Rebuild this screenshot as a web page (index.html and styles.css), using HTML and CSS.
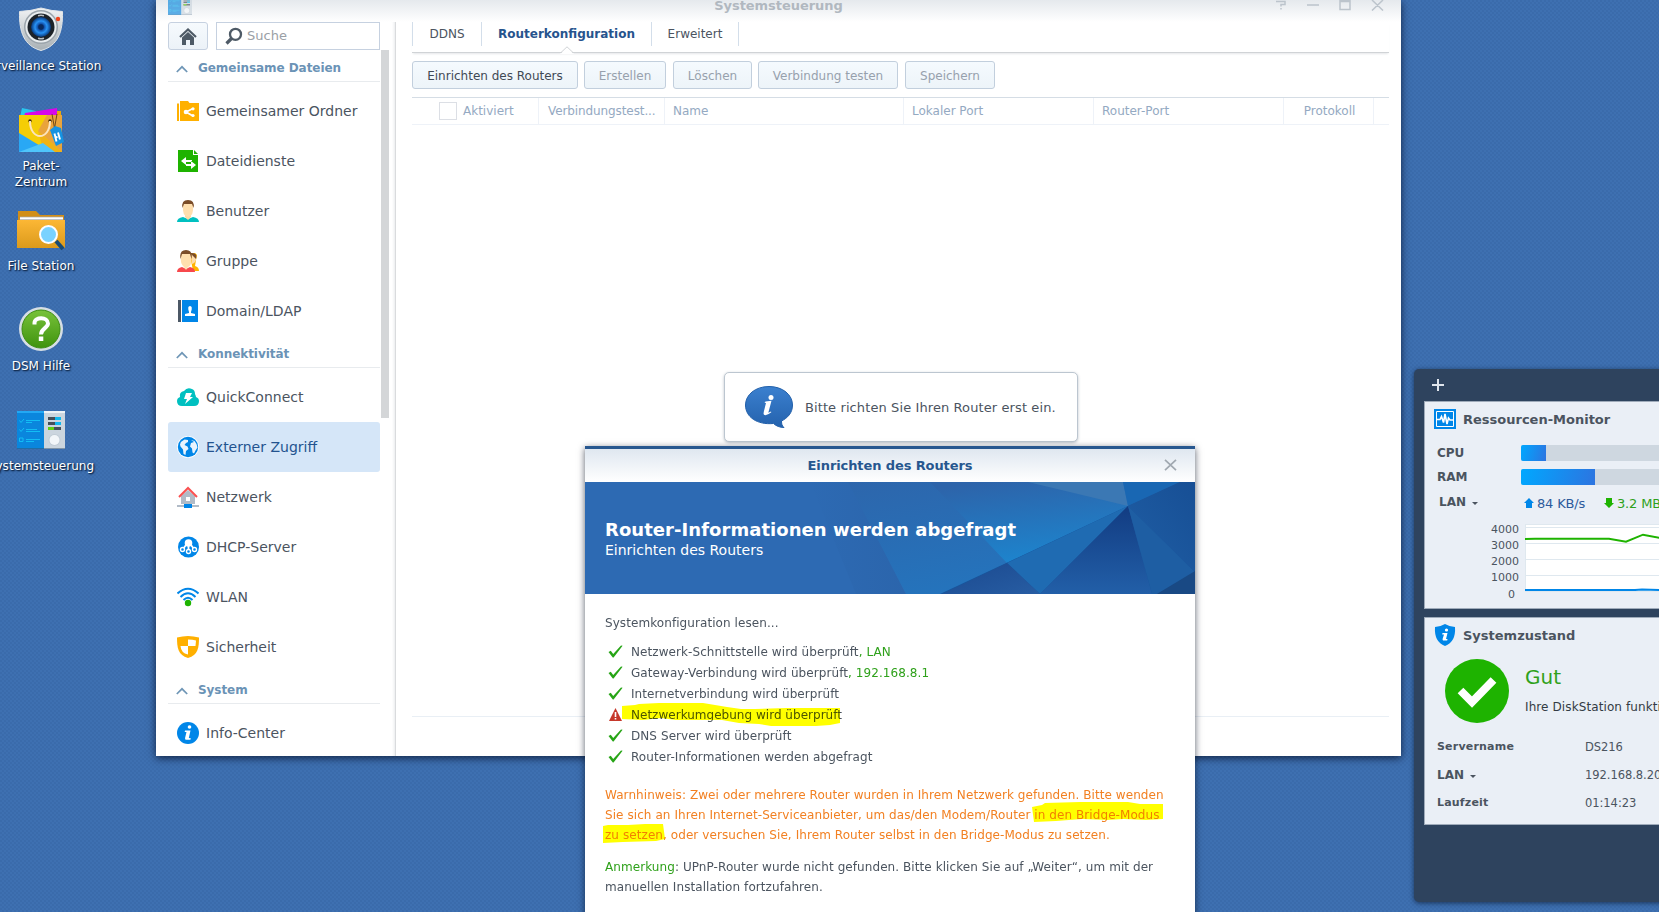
FILE: index.html
```
<!DOCTYPE html>
<html lang="de">
<head>
<meta charset="utf-8">
<title>Systemsteuerung</title>
<link rel="stylesheet" href="styles.css">
</head>
<body>
<svg width="0" height="0" class="defs">
  <defs>
    <symbol id="check" viewBox="0 0 15 13"><path d="M.5 7 2.800 5.800 5.200 9 13 .5 14.600.8 5.600 12.500H4.800z" fill="#27a516"/></symbol>
    <symbol id="chev" viewBox="0 0 12 8"><path d="M.8 7 6 1.800 11.200 7" fill="none" stroke="#6f96b6" stroke-width="1.700"/></symbol>
    <symbol id="panel" viewBox="0 0 48 38">
      <path d="M0 0h27v38H0z" fill="#0a86dd"/><path d="M0 0h27v2H0z" fill="#22a8f4"/><path d="M27 0h21v38H27z" fill="#cbd5de"/><path d="M27 0h21v2H27z" fill="#eef3f7"/>
      <path d="M2.500 9.500l1.500 2 3-3.500M2.500 18.500l1.500 2 3-3.500M2.500 27h3.500v3.500H2.500zM9 9.500h14M9 11.500h6M9 18.500h11M9 20.500h14M9 28.500h14M9 30.500h8" fill="none" stroke="#12bdf5" stroke-width="1"/>
      <path d="M31 6h13v3H31zM31 11h13v3H31zM31 16h13v3H31z" fill="#454e58"/><path d="M38 6h6v3h-6zM38 11h6v3h-6z" fill="#10b7ee"/><path d="M31 16h6v3h-6z" fill="#62cf10"/>
      <circle cx="37.500" cy="29" r="6" fill="#c1ccd6"/><circle cx="37.500" cy="29" r="5" fill="#f2f6f9"/><path d="M0 37h48v1H0z" fill="#35546f" opacity=".5"/>
    </symbol>
  </defs>
</svg>

<main class="desktop">
  <nav class="shortcuts">
    <a class="shortcut">
      <svg width="46" height="46" viewBox="0 0 46 46">
        <defs><linearGradient id="sg" x2="0" y2="1"><stop stop-color="#f1f3f4"/><stop offset="1" stop-color="#a8b0b5"/></linearGradient><radialGradient id="lens"><stop stop-color="#072c69"/><stop offset=".25" stop-color="#0b3e94"/><stop offset=".6" stop-color="#2792f5"/><stop offset="1" stop-color="#073679"/></radialGradient></defs>
        <path d="M1.500 4.500Q13 4 23 1q10 3 21.500 3.500C45 25 40 39 23 43.500 6 39 1 25 1.500 4.500z" fill="url(#sg)" stroke="#e1e5e8"/><circle cx="23" cy="20" r="17" fill="#9ba4ab"/><circle cx="23" cy="20" r="15.500" fill="#e9edef"/><circle cx="23" cy="20" r="13.500" fill="#1c2228"/><circle cx="23" cy="20" r="10" fill="url(#lens)"/><circle cx="23" cy="20" r="2.700" fill="#092a5d"/><path d="M20 8.800q3-1 6 0M20 31.200q3 1 6 0" stroke="#b8bec4" stroke-width="1.500" fill="none"/><circle cx="40" cy="12" r="2.200" fill="#f0441b"/>
      </svg><span>Surveillance Station</span></a>
    <a class="shortcut">
      <svg width="46" height="46" viewBox="0 0 46 46">
        <path d="M4 1l14 3v6H2z" fill="#29c5ee"/><path d="M7 6l32-5 1 9H6z" fill="#d707ea"/><path d="M39 4h4v6h-4z" fill="#e8a70c"/><path d="M1 8h43v37H1z" fill="#f5cd06"/><path d="M29 8h15v37L20 24z" fill="#e9a43b"/><path d="M20 24l24 21H26z" fill="#f0b313"/><path d="M1 26l23 14 5 5H1z" fill="#29a8f5"/><path d="M1 45l24-9 12 9z" fill="#4fc5fb"/>
        <circle cx="12" cy="14" r="1.700" fill="#3e2a08"/><circle cx="32" cy="14" r="1.700" fill="#3e2a08"/><path d="M12 14c0 20 20 20 20 0" fill="none" stroke="#fbe4bd" stroke-width="2"/><path d="M34 7l3 17M39 7l-3 17" stroke="#704a16" stroke-width="1"/><path d="M32 23l5-4 6 2 3 14-8 4z" fill="#1593e2"/><path d="M36.500 26.500l1 4 2-.6M37.500 30.500l1 4M40 25.500l2 7" fill="none" stroke="#fff" stroke-width="1.900"/>
      </svg><span>Paket-<br>Zentrum</span></a>
    <a class="shortcut">
      <svg width="50" height="46" viewBox="0 0 50 46">
        <defs><linearGradient id="fg" x2="0" y2="1"><stop stop-color="#fcb735"/><stop offset="1" stop-color="#db9a1c"/></linearGradient></defs>
        <path d="M2 4h18l4 4h24v20H2z" fill="#d18e18"/><path d="M4 10h43v7H4z" fill="#fff"/><path d="M4 10h43M4 12.500h43" stroke="#a9a9a9" stroke-width=".7"/><path d="M1 13h48v28H1z" fill="url(#fg)"/><path d="M40 34l7 8" stroke="#174b75" stroke-width="4"/><circle cx="32.500" cy="27.500" r="8.500" fill="#79d2ff" stroke="#fbfdff" stroke-width="2"/>
      </svg><span>File Station</span></a>
    <a class="shortcut">
      <svg width="46" height="46" viewBox="0 0 46 46">
        <defs><linearGradient id="hg" x2="0" y2="1"><stop stop-color="#78c23a"/><stop offset="1" stop-color="#3f930e"/></linearGradient></defs>
        <circle cx="23" cy="22" r="22" fill="#d6dee5"/><circle cx="23" cy="22" r="19" fill="url(#hg)" stroke="#3c8c10"/><path d="M16.500 17.500V16c0-6.500 13.500-6.500 13.500.500 0 4.500-7 5-7 11" fill="none" stroke="#fff" stroke-width="4"/><path d="M20.800 29.500h4.500V34h-4.500z" fill="#fff"/>
      </svg><span>DSM Hilfe</span></a>
    <a class="shortcut"><svg width="48" height="46" viewBox="0 0 48 46"><use href="#panel" width="48" height="38" y="4"/></svg><span>Systemsteuerung</span></a>
  </nav>

  <section class="window">
    <header class="titlebar">
      <svg class="appicon" width="24" height="19" viewBox="0 0 48 38"><use href="#panel" width="48" height="38"/></svg>
      <h1>Systemsteuerung</h1>
      <svg class="controls" width="112" height="14" viewBox="0 0 112 14"><g fill="none" stroke="#bcc4cc" stroke-width="1.500"><path d="M0 4.500h9v3H5v2M5 11v1.500M31 8h12"/><path d="M64 3.500h10v9H64zM63.500 4.500h11M96 3l11 10.500M107 3L96 13.500"/></g></svg>
    </header>
    <aside class="sidebar">
      <div class="search-row">
        <button class="home"><svg width="18" height="17" viewBox="0 0 18 17"><path d="M1 9 9 1.500 17 9" fill="none" stroke="#4e5a66" stroke-width="2.200"/><path d="M3 9.500 9 4l6 5.500V17h-4v-5H7v5H3z" fill="#4e5a66"/></svg></button>
        <label class="search"><svg width="18" height="18" viewBox="0 0 18 18"><circle cx="10.500" cy="7.300" r="5.500" fill="none" stroke="#4e5a66" stroke-width="2.300"/><path d="M7 11 1.500 16.500" stroke="#4e5a66" stroke-width="3.200"/></svg><span>Suche</span></label>
      </div>
      <div class="nav">
        <h2><svg width="12" height="8"><use href="#chev"/></svg>Gemeinsame Dateien</h2>
        <a><svg viewBox="0 0 22 22"><path d="M0 3.500h2V21H0zM3 1h8l1.500 2H22v18H3z" fill="#ffb000"/><path d="M9 12l7-3.500M9 12l7 4" stroke="#fff" stroke-width="1.800"/><circle cx="9" cy="12" r="2.300" fill="#fff"/><circle cx="16" cy="8.800" r="1.600" fill="#fff"/><circle cx="16" cy="15.500" r="1.600" fill="#fff"/></svg>Gemeinsamer Ordner</a>
        <a><svg viewBox="0 0 22 22"><path d="M1 0h15v5h5v17H1z" fill="#1eb300"/><path d="M17 0l4 4h-4z" fill="#1eb300"/><path d="M4 11l5-4v3h6v2H9v3zM19 15l-5-4v3H9v2h5v3z" fill="#fff"/></svg>Dateidienste</a>
        <a><svg viewBox="0 0 22 22"><path d="M0 22q0-4 6-5l5 2 5-2q6 1 6 5z" fill="#00c0c0"/><path d="M8 13h6v4l-3 3-3-3z" fill="#ffd9a0"/><path d="M6 6q0-3 5-3t5 3q1 10-5 11Q5 16 6 6z" fill="#ffdfae"/><path d="M5.500 8Q4 0 11 0q7 0 5.500 8L15 4H7z" fill="#7b4d28"/></svg>Benutzer</a>
        <a><svg viewBox="0 0 22 22"><path d="M13 5q5-4 7 0l-1 5-1 6q4 1 4 5h-6z" fill="#ffb500"/><path d="M14 5h5q1 8-4 9z" fill="#ffdca8"/><path d="M13 3q8-1 6 6l-2-2z" fill="#7b4d28"/><path d="M0 22q0-4 5-5l4 2 4-2q5 1 5 5z" fill="#f7484c"/><path d="M4 6q0-4 5-4t5 4q1 10-3 11l-2 3-2-3Q3 14 4 6z" fill="#ffdfae"/><path d="M3.500 9Q2 0 9 0q7 0 5.500 9L13 4H5z" fill="#7b4d28"/></svg>Gruppe</a>
        <a><svg viewBox="0 0 22 22"><path d="M1 0h3v22H1z" fill="#4c5866"/><path d="M5 0h16v22H5z" fill="#0086e8"/><path d="M8 16v-2l4-1v-1q-2-6 1-6t1 6v1l4 1v2z" fill="#fff"/></svg>Domain/LDAP</a>
        <h2><svg width="12" height="8"><use href="#chev"/></svg>Konnektivität</h2>
        <a><svg viewBox="0 0 22 22"><path d="M5 20q-5 0-5-5 0-3 3-4-1-5 4-6 3-4 8-2 3 1 3 5 1 2 1 3 3 1 3 4 0 5-5 5z" fill="#00c0c0"/><path d="M9 7h6l-2 4h3l-8 7 2-5H7z" fill="#fff"/></svg>QuickConnect</a>
        <a class="selected"><svg viewBox="0 0 22 22"><circle cx="11" cy="11" r="11" fill="#fff"/><circle cx="11" cy="11" r="10.200" fill="#0086e8"/><path d="M3 8.500q1-3.500 4.500-5l3.500.5v2L9 7 7.500 9l3 1.500 1 2.500-2.500 2-.5 4-2-1-.5-4.500-2.500-3zM14 4l3.500 1q3 3.500 3 6.500l-2 3-1.500 3-1.500-1-.5-4-2-2 1-3.500 3-1z" fill="#e9f3fd"/></svg>Externer Zugriff</a>
        <a><svg viewBox="0 0 22 22"><path d="M4 10l7-6 7 6v8H4z" fill="#b1bbc7"/><path d="M9 11h4v4H9z" fill="#fff"/><path d="M2 11 11 2l9 9" fill="none" stroke="#fa5050" stroke-width="2"/><path d="M0 20h22" stroke="#b1bbc7" stroke-width="2"/><path d="M7 18h8v4H7z" fill="#0086e8"/></svg>Netzwerk</a>
        <a><svg viewBox="0 0 22 22"><circle cx="11.500" cy="11" r="10.500" fill="#0086e8"/><circle cx="11.500" cy="7" r="3.800" fill="#fff"/><path d="M11.500 9v6M9 9l-3 4M14 9l3 4" stroke="#fff" stroke-width="1.800"/><g fill="#0086e8" stroke="#fff" stroke-width="1.400"><circle cx="5.500" cy="13.500" r="2"/><circle cx="17.500" cy="13.500" r="2"/><circle cx="11.500" cy="15.500" r="2"/></g></svg>DHCP-Server</a>
        <a><svg viewBox="0 0 22 22"><g fill="none" stroke="#0086e8" stroke-width="2"><path d="M.5 7.500Q11-2 21.500 7.500M3.500 11Q11 3.500 18.500 11M6.500 14Q11 9.500 15.500 14"/></g><circle cx="11" cy="17" r="3.200" fill="#1eb300"/></svg>WLAN</a>
        <a><svg viewBox="0 0 22 22"><path d="M0 1.500Q11-1.500 22 1.500C22 12 21 19 11 22 1 19 0 12 0 1.500z" fill="#ffb000"/><path d="M11 3.500q5 0 8 1L18.500 10H11zM3.500 10H11v8.500Q4 17 3.500 10z" fill="#fff"/></svg>Sicherheit</a>
        <h2><svg width="12" height="8"><use href="#chev"/></svg>System</h2>
        <a><svg viewBox="0 0 22 22"><circle cx="11" cy="11" r="11" fill="#0086e8"/><circle cx="12.500" cy="5" r="1.800" fill="#fff"/><path d="M8 8.500h5.500l-1.700 7.500 2 .2-.4 1.600H8.500l-.5-1.500 1.500-6.200H7.700z" fill="#fff"/></svg>Info-Center</a>
      </div>
      <i class="thumb"></i>
    </aside>
    <section class="content">
      <div class="tabs"><span class="t1">DDNS</span><span class="t2 on">Routerkonfiguration<svg class="notch" width="14" height="8" viewBox="0 0 14 8"><path d="M0 7.500h1L7 1l6 6.500h1V8H0z" fill="#fff"/><path d="M0 6.500h1L7 .8l6 5.700h1" fill="none" stroke="#d0d3d6"/></svg></span><span class="t3">Erweitert</span></div>
      <div class="toolbar"><button class="b1">Einrichten des Routers</button><button class="b2" disabled>Erstellen</button><button class="b3" disabled>Löschen</button><button class="b4" disabled>Verbindung testen</button><button class="b5" disabled>Speichern</button></div>
      <div class="thead"><span class="c1"><i class="box"></i>Aktiviert</span><span class="c2">Verbindungstest...</span><span>Name</span><span>Lokaler Port</span><span>Router-Port</span><span class="c6">Protokoll</span><span></span></div>
      <div class="grid-body"></div>
    </section>
  </section>

  <div class="notice">
    <svg width="48" height="43" viewBox="0 0 48 43"><defs><linearGradient id="ng" x2="0" y2="1"><stop stop-color="#3b80cf"/><stop offset="1" stop-color="#2462ad"/></linearGradient></defs><path d="M24 .5C38 .5 47.500 9 47.500 19c0 8-5 13-11 16 0 3 .5 5 2.500 6.500-4 0-8-1.500-10.500-4C12 39 .5 31 .5 19 .5 9 10 .5 24 .5z" fill="url(#ng)" stroke="#2260aa"/><circle cx="26" cy="11.500" r="2.500" fill="#fff"/><path d="M20.500 15.500l6-.7-3.200 12 2.700-1.300.3.800q-5 4-7.300 2.500-.8-.7-.2-3l2.200-8.800-1.500-.3z" fill="#fff"/></svg>
    <span>Bitte richten Sie Ihren Router erst ein.</span>
  </div>

  <section class="dialog">
    <header><h3>Einrichten des Routers</h3><svg class="close" width="13" height="12" viewBox="0 0 13 12"><path d="M1 .8 12 11.200M12 .8 1 11.200" stroke="#a0a8b0" stroke-width="1.700"/></svg></header>
    <div class="banner">
      <svg class="facets" width="610" height="112" viewBox="0 0 610 112" preserveAspectRatio="none">
        <defs><linearGradient id="f1" x2=".6" y2="1"><stop stop-color="#2d66ac"/><stop offset="1" stop-color="#2376bf"/></linearGradient><linearGradient id="f2" x1=".3" x2=".6" y2="1"><stop stop-color="#2d64aa"/><stop offset="1" stop-color="#1c86cf"/></linearGradient><linearGradient id="f3" y1="1" x2="1" y2="0"><stop stop-color="#1f5ea5"/><stop offset="1" stop-color="#174f95"/></linearGradient><linearGradient id="f4" x2="0" y2="1"><stop stop-color="#123c82"/><stop offset="1" stop-color="#225fa8"/></linearGradient><linearGradient id="f5" x2="1" y2="1"><stop stop-color="#1b498f"/><stop offset="1" stop-color="#275da3"/></linearGradient><linearGradient id="f0"><stop stop-color="#2d6ab3"/><stop offset="1" stop-color="#2b65ac"/></linearGradient></defs>
        <path d="M0 0h610v112H0z" fill="#2d6ab3"/><path d="M225 0h40l56 112h-50z" fill="url(#f0)"/>
        <path d="M263 0h347v112H321z" fill="url(#f1)"/><path d="M345 0h199v24L422 81z" fill="url(#f2)"/><path d="M443 0h95l5 24z" fill="#3b78b4"/><path d="M538 0h57l-52 24z" fill="#1967b3"/><path d="M595 0h15v112H355L543 24z" fill="#17559c"/>
        <path d="M543 24 422 81 455 112z" fill="#1f6bb2"/><path d="M422 81l33 31H357z" fill="url(#f5)"/><path d="M543 24 455 112h112z" fill="url(#f4)"/><path d="M543 24 610 90l-38 22h-5z" fill="#1e5ea3"/><path d="M543 24 610 90V0h-15z" fill="url(#f3)"/><path d="M610 89v23h-38z" fill="#194984"/>
      </svg>
      <div class="banner-text"><h2>Router-Informationen werden abgefragt</h2><p>Einrichten des Routers</p></div>
    </div>
    <div class="dialog-body">
      <p class="intro">Systemkonfiguration lesen...</p>
      <ul>
        <li><svg width="15" height="13"><use href="#check"/></svg><span>Netzwerk-Schnittstelle wird überprüft<em>, LAN</em></span></li>
        <li><svg width="15" height="13"><use href="#check"/></svg><span>Gateway-Verbindung wird überprüft<em>, 192.168.8.1</em></span></li>
        <li><svg width="15" height="13"><use href="#check"/></svg><span>Internetverbindung wird überprüft</span></li>
        <li><svg width="15" height="13" viewBox="0 0 15 13"><path d="M7.500 0 14 13H1z" fill="#c6382b"/><path d="M6.700 4h1.600v5H6.700zM6.700 10h1.600v1.500H6.700z" fill="#fff"/></svg><span class="tight">Netzwerkumgebung wird überprüft</span></li>
        <li><svg width="15" height="13"><use href="#check"/></svg><span>DNS Server wird überprüft</span></li>
        <li><svg width="15" height="13"><use href="#check"/></svg><span>Router-Informationen werden abgefragt</span></li>
      </ul>
      <p class="warn">Warnhinweis: Zwei oder mehrere Router wurden in Ihrem Netzwerk gefunden. Bitte wenden<br>Sie sich an Ihren Internet-Serviceanbieter, um das/den Modem/Router in den Bridge-Modus<br>zu setzen, oder versuchen Sie, Ihrem Router selbst in den Bridge-Modus zu setzen.</p>
      <p class="note"><em>Anmerkung</em>: UPnP-Router wurde nicht gefunden. Bitte klicken Sie auf „Weiter“, um mit der<br>manuellen Installation fortzufahren.</p>
      <svg class="marker" width="610" height="318" viewBox="0 0 610 318"><g fill="#ff0"><path d="M37 112l13-1 4-1 20-1h44l12 2 12 2 14 2h14l32-1h53v15l-10 2-14 1h-45l-12-2-20-1-17-3H91l-15-2-18 2-21-1z"/><path d="M447 213l10-2 3-2 35-1h48l12 2h23v15l-17 1-22-1-17 1-25-1-26 2-22 1z"/><path d="M18 232l5-1h20l17-1h18l2 15-9 2-33 1-20 1z"/></g></svg>
    </div>
  </section>

  <aside class="widgets">
    <svg class="plus" width="12" height="12"><path d="M6 0v12M0 6h12" stroke="#dfe5ec" stroke-width="2"/></svg>
    <section class="card">
      <h4><svg width="22" height="20" viewBox="0 0 22 20"><path d="M0 0h22v20H0z" fill="#0086e8"/><path d="M2.500 2.500h17v15h-17z" fill="none" stroke="#fff"/><path d="M3 10.500h3l1.500-3 2 6L11 5l2 10 1.500-6 1.500 2h3" fill="none" stroke="#fff" stroke-width="1.600"/></svg><span>Ressourcen-Monitor</span></h4>
      <div class="meter"><b>CPU</b><i class="track"><i style="width:25px"></i></i></div>
      <div class="meter"><b>RAM</b><i class="track"><i style="width:74px"></i></i></div>
      <div class="lan"><b>LAN <i class="caret"></i></b><svg width="10" height="10"><path d="M5 0l5 5H8v5H2V5H0z" fill="#0086e8"/></svg><span class="up">84 KB/s</span><svg width="10" height="10"><path d="M5 10l5-5H8V0H2v5H0z" fill="#1eb300"/></svg><span class="down">3.2 MB/s</span></div>
      <div class="graph">
        <div class="axis"><span>4000</span><span>3000</span><span>2000</span><span>1000</span><span class="zero">0</span></div>
        <svg width="200" height="68" viewBox="0 0 200 68"><path d="M0 0h200v68H0z" fill="#fff"/><path d="M0 .5h200M0 3.500h200M0 19.500h200M0 35.500h200M0 51.500h200M0 67.500h200M.5 0v68" stroke="#dfe8ef"/><path d="M0 66h110l7-.5 17 .5h66" fill="none" stroke="#0086e8" stroke-width="2"/><path d="M0 15l10-.3h74l17 3 17-7 17 3.300" fill="none" stroke="#1eb300" stroke-width="2"/></svg>
      </div>
    </section>
    <section class="card status">
      <h4><svg width="22" height="22" viewBox="0 0 22 22"><path d="M1 3Q7 2.500 11 0q4 2.500 10 3 1 15-10 19Q0 18 1 3z" fill="#0086e8"/><circle cx="12.500" cy="6" r="1.600" fill="#fff"/><path d="M8.500 9h5l-1.500 6 1.500.1-.3 1.400H9l-.5-1.200L10 10.500H8.200z" fill="#fff"/></svg><span>Systemzustand</span></h4>
      <div class="health"><svg width="64" height="64" viewBox="0 0 64 64"><circle cx="32" cy="32" r="32" fill="#1eb300"/><path d="M15.500 31.500 27 43 48.500 21" fill="none" stroke="#fff" stroke-width="8"/></svg><div><strong>Gut</strong><span>Ihre DiskStation funktioniert</span></div></div>
      <dl><dt>Servername</dt><dd>DS216</dd><dt class="big">LAN <i class="caret"></i></dt><dd>192.168.8.20</dd><dt>Laufzeit</dt><dd>01:14:23</dd></dl>
    </section>
  </aside>
</main>
</body>
</html>
```
FILE: styles.css
```
* { box-sizing: border-box; margin: 0; padding: 0; }
body { width: 1659px; height: 912px; overflow: hidden; font: 12px/16px "DejaVu Sans", sans-serif; color: #4b545f; }
h1, h2, h3, h4 { font-size: 12px; line-height: 16px; }
button { font: inherit; }
em, i { font-style: normal; }
svg { flex: none; display: block; }
.defs { position: absolute; }
.desktop {
  position: relative; width: 1659px; height: 912px; overflow: hidden; white-space: nowrap;
  background-color: #3e70b1;
  background-image: radial-gradient(circle at 1px 1px, rgba(22,60,120,.1) 0 1px, transparent 1.3px), radial-gradient(circle at 3px 3px, rgba(22,60,120,.1) 0 1px, transparent 1.3px);
  background-size: 4px 4px;
}

/* Desktop shortcuts */
.shortcuts { position: absolute; left: -39px; top: 7px; width: 160px; }
.shortcut { height: 100px; display: flex; flex-direction: column; align-items: center; gap: 4px; color: #fff; text-align: center; letter-spacing: .03px; text-shadow: 1px 1px 2px #122c50, 1px 1px 1px #122c50; }
.shortcut span { padding-top: 1px; }

/* Control panel window */
.window {
  position: absolute; left: 156px; top: 0; width: 1245px; height: 756px; background: linear-gradient(#e5e9ed, #fff 22px);
  box-shadow: 0 2px 8px rgba(0,10,30,.75); display: grid; grid-template: 22px 734px / 240px 1fr;
}
.titlebar { grid-column: 1 / 3; display: flex; align-items: flex-start; padding: 0 13px 0 12px; justify-content: space-between; overflow: hidden; }
.appicon { margin-top: -4px; opacity: .65; }
.titlebar h1 { margin: -2px 0 0 89px; color: #b1b8c0; font-size: 13px; letter-spacing: -.05px; }
.controls { margin-top: -3px; }
.sidebar { position: relative; padding-left: 12px; border-right: 1px solid #d9dbdd; box-shadow: inset -3px 0 3px -2px #e8eaec; overflow: hidden; }
.search-row { display: flex; gap: 8px; height: 28px; }
.home { width: 40px; border: 1px solid #c6d1e0; border-radius: 3px; background: linear-gradient(#f6fafd, #ecf2f8); display: grid; place-items: center; }
.search { width: 164px; border: 1px solid #c6d1e0; background: #fff; display: flex; align-items: center; padding-left: 8px; gap: 4px; color: #9aa0a6; }
.search span { font-size: 13px; }
.nav { width: 212px; }
.nav h2 { height: 36px; padding: 9px 0 0 8px; display: flex; gap: 10px; color: #6b93b6; background: linear-gradient(#e8ebee, #e8ebee) 0 31px / 100% 1px no-repeat; line-height: 18px; letter-spacing: -.06px; }
.nav h2 svg { margin-top: 6px; }
.nav a { height: 50px; display: flex; align-items: center; gap: 7px; padding-left: 9px; font-size: 14px; border-radius: 3px; }
.nav a svg { width: 22px; height: 22px; }
.nav .selected { background: #d5e6f8; color: #23538f; }
.thumb { position: absolute; left: 225px; top: 28px; width: 8px; height: 368px; background: #d4d6d8; }

.content { padding: 0 12px 0 16px; }
.tabs { height: 31px; border-bottom: 1px solid #d0d3d6; box-shadow: 0 2px 2px -1px #e5e7e9; display: flex; }
.tabs span { height: 24px; border-left: 1px solid #d3deea; padding-top: 4px; text-align: center; }
.tabs .t1 { width: 69px; } .tabs .t2 { width: 170px; } .tabs .t3 { width: 88px; border-right: 1px solid #d3deea; }
.tabs .on { position: relative; font-weight: bold; color: #27548d; }
.notch { position: absolute; left: 78px; top: 24px; }
.toolbar { display: flex; padding-top: 8px; height: 44px; align-items: flex-start; }
.toolbar button { height: 28px; border: 1px solid #c2cfdd; border-radius: 3px; background: linear-gradient(#f5fafe, #edf4f9); color: #3f4955; padding-top: 1px; }
.toolbar button:disabled { color: #97a1ad; }
.b1 { width: 166px; margin-right: 6px; } .b2 { width: 82px; margin-right: 7px; } .b3 { width: 79px; margin-right: 6px; } .b4 { width: 140px; margin-right: 7px; } .b5 { width: 90px; }
.thead { height: 28px; border-top: 1px solid #d5dde5; border-bottom: 1px solid #eef2f8; display: grid; grid-template-columns: 127px 126px 239px 190px 190px 90px 1fr; color: #94a9c2; }
.thead span { border-right: 1px solid #eef2f8; padding: 5px 0 0 8px; }
.thead span:last-child { border: 0; }
.thead .c1 { display: flex; gap: 6px; padding: 4px 0 0 27px; line-height: 18px; }
.thead .c2 { padding-left: 9px; letter-spacing: -.1px; }
.thead .c6 { padding-left: 2px; text-align: center; }
.box { width: 18px; height: 18px; border: 1px solid #dcdfe5; }
.grid-body { height: 592px; border-bottom: 1px solid #e9eff5; }

.notice { position: absolute; left: 724px; top: 372px; width: 354px; height: 70px; border: 1px solid #bcc6d0; border-radius: 5px; background: #fff; box-shadow: 0 1px 3px rgba(60,80,100,.35); display: flex; align-items: center; gap: 12px; padding-left: 20px; font-size: 13px; letter-spacing: .1px; }
.notice span { padding-top: 2px; }

/* Router wizard */
.dialog { position: absolute; left: 585px; top: 446px; width: 610px; height: 500px; background: #fff; border-top: 3px solid #27578f; box-shadow: 0 2px 7px rgba(0,10,30,.65); }
.dialog header { height: 33px; background: linear-gradient(#dfe7f0, #fff); display: flex; align-items: center; justify-content: center; color: #27578f; position: relative; }
.dialog h3 { font-size: 13px; letter-spacing: -.1px; }
.close { position: absolute; right: 18px; top: 10px; }
.banner { height: 112px; display: grid; color: #fff; }
.banner > * { grid-area: 1 / 1; }
.banner-text { z-index: 1; padding: 36px 0 0 20px; }
.banner h2 { font-size: 18px; line-height: 23px; letter-spacing: .05px; }
.banner p { font-size: 14px; line-height: 18px; }
.dialog-body { position: relative; padding: 21px 20px 0; isolation: isolate; letter-spacing: .075px; }
.dialog-body ul { list-style: none; padding: 10px 0 0 3px; }
.dialog-body li { height: 21px; display: flex; gap: 8px; align-items: center; }
.dialog-body .tight { letter-spacing: .02px; }
.dialog em { color: #2fa11b; }
.warn, .note { line-height: 20px; }
.warn { padding-top: 18px; color: #f28022; }
.note { padding-top: 12px; }
.marker { position: absolute; left: 0; top: 0; mix-blend-mode: multiply; }

/* Widget panel */
.widgets { position: absolute; left: 1414px; top: 369px; width: 300px; height: 533px; border-radius: 5px; background: #2e435e; box-shadow: 0 1px 5px rgba(10,25,50,.7); padding: 10px 0 0 10px; }
.plus { margin: 0 0 10px 8px; }
.card { height: 208px; border: 1px solid #9fabba; background: #eaeff6; margin-bottom: 8px; }
.card h4 { display: flex; align-items: center; gap: 7px; padding: 7px 0 0 9px; font-size: 13px; }
.card h4 span { padding-top: 1px; }
.meter { height: 16px; display: flex; align-items: center; padding-left: 12px; margin-bottom: 8px; }
.card h4 + .meter { margin-top: 16px; }
.meter b { width: 84px; }
.track { flex: 1; height: 16px; background: #ced7e0; border-radius: 2px 0 0 2px; overflow: hidden; }
.track i { display: block; height: 100%; background: linear-gradient(105deg, #00a8ff, #2d74e0); }
.lan { display: flex; align-items: center; padding-left: 14px; height: 20px; font-size: 13px; letter-spacing: -.15px; }
.lan span { padding-top: 1px; }
.lan b { width: 85px; font-size: 12px; padding-bottom: 2px; letter-spacing: 0; }
.caret { display: inline-block; margin-left: 2px; border: 3.5px solid transparent; border-top-color: #4b545f; border-bottom: 0; vertical-align: 1px; }
.up { width: 70px; padding-left: 3px; color: #2c5b9c; } .down { padding-left: 3px; color: #2fa11b; }
.graph { display: flex; gap: 6px; padding-top: 11px; }
.axis { flex: none; width: 94px; display: flex; flex-direction: column; text-align: right; font-size: 11px; line-height: 16px; margin-top: -2px; }
.zero { padding: 1px 4px 0 0; }
.status h4 { padding-top: 6px; }
.health { display: flex; gap: 16px; padding: 13px 0 0 20px; }
.health div { display: flex; flex-direction: column; padding-top: 6px; gap: 10px; color: #333b44; letter-spacing: .1px; }
.health strong { font-size: 20px; line-height: 24px; font-weight: normal; color: #2fa11b; }
.status dl { display: grid; grid-template: repeat(3, 28px) / 148px 1fr; padding: 9px 0 0 12px; align-items: center; }
.status dt { font-weight: bold; font-size: 11px; letter-spacing: .2px; padding-top: 1px; }
.status .big { font-size: 12px; letter-spacing: 0; padding-top: 2px; }
.status dd { font-size: 11.5px; letter-spacing: -.05px; padding-top: 1px; }
```
